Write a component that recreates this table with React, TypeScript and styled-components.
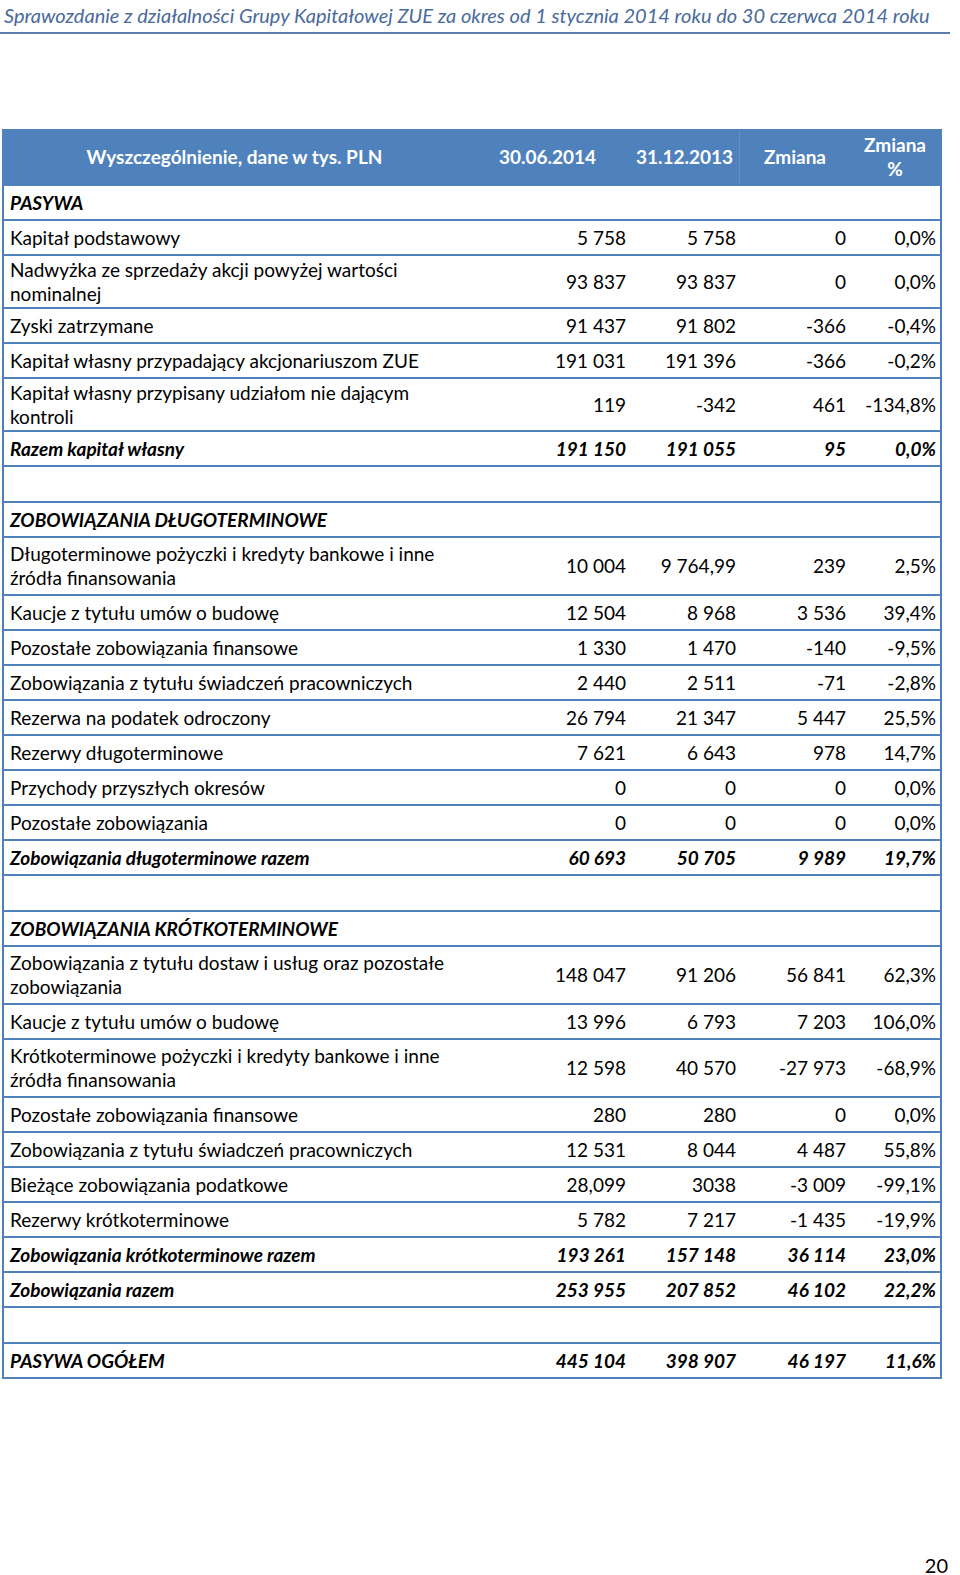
import React from "react";
import styled, { createGlobalStyle } from "styled-components";

const Global = createGlobalStyle`
  html, body { margin: 0; padding: 0; background: #fff; }
  body { font-family: "Lato", "Open Sans", sans-serif; color: #000; }
`;

const Page = styled.div`
  width: 960px;
  height: 1575px;
  position: relative;
  display: flex;
  flex-direction: column;
  box-sizing: border-box;
`;

const RunningHead = styled.div`
  margin: 0 10px 0 0;
  padding: 3px 0 5px 4px;
  font-family: "Lato", sans-serif;
  font-style: italic;
  font-weight: 400;
  font-size: 20px;
  line-height: 24px;
  color: #4a6a9c;
  border-bottom: 2px solid #5b7db1;
  white-space: nowrap;
`;

const Table = styled.div`
  margin: 95px 0 0 2px;
  width: 940px;
  border-left: 2px solid #4f81bd;
  border-right: 2px solid #4f81bd;
  border-bottom: 2px solid #4f81bd;
  box-sizing: border-box;
`;

const cols = "461px 165px 110px 110px 1fr";

const HeadRow = styled.div`
  display: grid;
  grid-template-columns: ${cols};
  height: 55px;
  background: #4f81bd;
  color: #fff;
  font-weight: 700;
  font-size: 19px;
  border-top: 2px solid #4f81bd;
  box-sizing: border-box;
`;

const HeadCell = styled.div<{ $divider?: boolean }>`
  display: flex;
  align-items: center;
  justify-content: center;
  text-align: center;
  line-height: 24px;
  padding-bottom: 2px;
  border-right: ${(p) => (p.$divider ? "1px solid rgba(255,255,255,0.12)" : "none")};
`;

const Row = styled.div<{ $h: number }>`
  display: grid;
  grid-template-columns: ${cols};
  height: ${(p) => p.$h}px;
  border-top: 2px solid #4f81bd;
  box-sizing: border-box;
  font-size: 19px;
`;

const Label = styled.div<{ $strong?: boolean }>`
  display: flex;
  flex-direction: column;
  justify-content: center;
  padding-left: 6px;
  line-height: 24px;
  font-weight: ${(p) => (p.$strong ? 700 : 400)};
  font-style: ${(p) => (p.$strong ? "italic" : "normal")};
  white-space: nowrap;
`;

const Value = styled.div<{ $strong?: boolean }>`
  display: flex;
  align-items: center;
  justify-content: flex-end;
  padding-right: 4px;
  line-height: 24px;
  font-weight: ${(p) => (p.$strong ? 700 : 400)};
  font-style: ${(p) => (p.$strong ? "italic" : "normal")};
  white-space: nowrap;
`;

const PageNumber = styled.div`
  position: absolute;
  right: 12px;
  bottom: -2px;
  font-size: 20px;
  line-height: 24px;
`;

type R =
  | { kind: "section"; label: string }
  | { kind: "empty" }
  | { kind: "data" | "total"; label: string[]; v: [string, string, string, string]; h?: number };

const rows: R[] = [
  { kind: "section", label: "PASYWA" },
  { kind: "data", label: ["Kapitał podstawowy"], v: ["5 758", "5 758", "0", "0,0%"] },
  { kind: "data", label: ["Nadwyżka ze sprzedaży akcji powyżej wartości", "nominalnej"], v: ["93 837", "93 837", "0", "0,0%"], h: 53 },
  { kind: "data", label: ["Zyski zatrzymane"], v: ["91 437", "91 802", "-366", "-0,4%"] },
  { kind: "data", label: ["Kapitał własny przypadający akcjonariuszom ZUE"], v: ["191 031", "191 396", "-366", "-0,2%"] },
  { kind: "data", label: ["Kapitał własny przypisany udziałom nie dającym", "kontroli"], v: ["119", "-342", "461", "-134,8%"], h: 53 },
  { kind: "total", label: ["Razem kapitał własny"], v: ["191 150", "191 055", "95", "0,0%"] },
  { kind: "empty" },
  { kind: "section", label: "ZOBOWIĄZANIA DŁUGOTERMINOWE" },
  { kind: "data", label: ["Długoterminowe pożyczki i kredyty bankowe i inne", "źródła finansowania"], v: ["10 004", "9 764,99", "239", "2,5%"], h: 58 },
  { kind: "data", label: ["Kaucje z tytułu umów o budowę"], v: ["12 504", "8 968", "3 536", "39,4%"] },
  { kind: "data", label: ["Pozostałe zobowiązania finansowe"], v: ["1 330", "1 470", "-140", "-9,5%"] },
  { kind: "data", label: ["Zobowiązania z tytułu świadczeń pracowniczych"], v: ["2 440", "2 511", "-71", "-2,8%"] },
  { kind: "data", label: ["Rezerwa na podatek odroczony"], v: ["26 794", "21 347", "5 447", "25,5%"] },
  { kind: "data", label: ["Rezerwy długoterminowe"], v: ["7 621", "6 643", "978", "14,7%"] },
  { kind: "data", label: ["Przychody przyszłych okresów"], v: ["0", "0", "0", "0,0%"] },
  { kind: "data", label: ["Pozostałe zobowiązania"], v: ["0", "0", "0", "0,0%"] },
  { kind: "total", label: ["Zobowiązania długoterminowe razem"], v: ["60 693", "50 705", "9 989", "19,7%"] },
  { kind: "empty" },
  { kind: "section", label: "ZOBOWIĄZANIA KRÓTKOTERMINOWE" },
  { kind: "data", label: ["Zobowiązania z tytułu dostaw i usług oraz pozostałe", "zobowiązania"], v: ["148 047", "91 206", "56 841", "62,3%"], h: 58 },
  { kind: "data", label: ["Kaucje z tytułu umów o budowę"], v: ["13 996", "6 793", "7 203", "106,0%"] },
  { kind: "data", label: ["Krótkoterminowe pożyczki i kredyty bankowe i inne", "źródła finansowania"], v: ["12 598", "40 570", "-27 973", "-68,9%"], h: 58 },
  { kind: "data", label: ["Pozostałe zobowiązania finansowe"], v: ["280", "280", "0", "0,0%"] },
  { kind: "data", label: ["Zobowiązania z tytułu świadczeń pracowniczych"], v: ["12 531", "8 044", "4 487", "55,8%"] },
  { kind: "data", label: ["Bieżące zobowiązania podatkowe"], v: ["28,099", "3038", "-3 009", "-99,1%"] },
  { kind: "data", label: ["Rezerwy krótkoterminowe"], v: ["5 782", "7 217", "-1 435", "-19,9%"] },
  { kind: "total", label: ["Zobowiązania krótkoterminowe razem"], v: ["193 261", "157 148", "36 114", "23,0%"] },
  { kind: "total", label: ["Zobowiązania razem"], v: ["253 955", "207 852", "46 102", "22,2%"] },
  { kind: "empty" },
  { kind: "total", label: ["PASYWA OGÓŁEM"], v: ["445 104", "398 907", "46 197", "11,6%"] },
];

export default function App() {
  return (
    <Page>
      <Global />
      <RunningHead>
        Sprawozdanie z działalności Grupy Kapitałowej ZUE za okres od 1 stycznia 2014 roku do 30 czerwca 2014 roku
      </RunningHead>
      <Table>
        <HeadRow>
          <HeadCell>Wyszczególnienie, dane w tys. PLN</HeadCell>
          <HeadCell>30.06.2014</HeadCell>
          <HeadCell $divider>31.12.2013</HeadCell>
          <HeadCell>Zmiana</HeadCell>
          <HeadCell>
            Zmiana
            <br />%
          </HeadCell>
        </HeadRow>
        {rows.map((r, i) => {
          if (r.kind === "empty") return <Row key={i} $h={36} />;
          if (r.kind === "section")
            return (
              <Row key={i} $h={35}>
                <Label $strong>{r.label}</Label>
              </Row>
            );
          const strong = r.kind === "total";
          return (
            <Row key={i} $h={r.h ?? 35}>
              <Label $strong={strong}>
                {r.label.map((l, j) => (
                  <span key={j}>{l}</span>
                ))}
              </Label>
              {r.v.map((v, j) => (
                <Value key={j} $strong={strong}>
                  {v}
                </Value>
              ))}
            </Row>
          );
        })}
      </Table>
      <PageNumber>20</PageNumber>
    </Page>
  );
}
